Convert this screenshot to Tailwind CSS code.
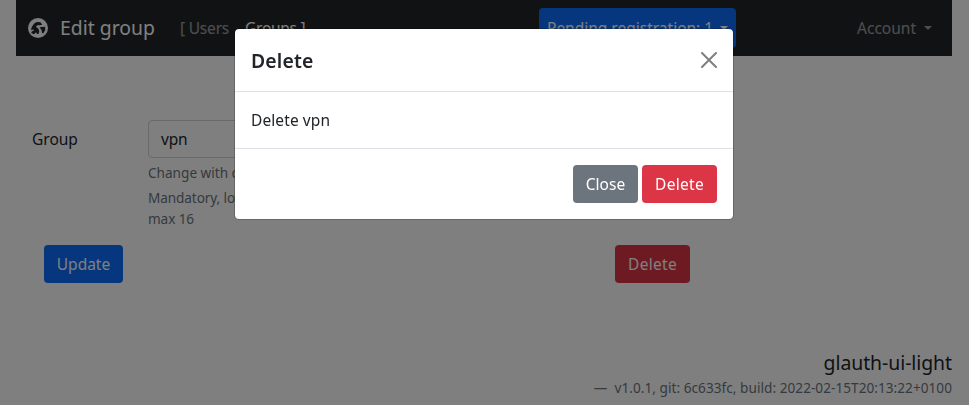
<!DOCTYPE html>
<html lang="en">
<head>
<meta charset="utf-8">
<title>Edit group</title>
<script src="https://cdn.jsdelivr.net/npm/@tailwindcss/browser@4"></script>
</head>
<body class="h-[405px] overflow-hidden bg-white font-['Noto_Sans',sans-serif] text-[15.5px] leading-6 text-[#212529]">
<div class="flex h-[405px] flex-col pl-4 pr-[17px]">
  <nav class="flex h-14 shrink-0 items-center bg-[#212529] pl-3 pr-5 whitespace-nowrap">
    <svg class="size-5 shrink-0" viewBox="0 0 20 20"><circle cx="10" cy="10" r="10" fill="#fff"/><path d="M3 12C3.5 8 6 5 9 4L12.5 4.3 14.3 6.8 11.5 7.3 9.8 7 7.8 8.8 10.2 10.5 11.2 13 10.8 15.8 9 16 8 14.2 6 16.2 3.2 15 3.8 13.6 6 12.6 5.4 11.6ZM11.6 9.2 17.2 8.8 17.2 12 15.2 15.4 14 14.8 13.6 12.2Z" fill="#212529"/></svg>
    <span class="ml-3 w-[120px] text-[19.4px] text-white">Edit group</span>
    <span class="w-[65px] tracking-[-0.2px] text-white/55">[ Users</span>
    <span class="w-[294px] tracking-[-0.25px] text-white">Groups ]</span>
    <button class="flex h-10 w-[197px] items-center rounded bg-[#0d6efd] pl-2 text-white"><span class="w-[173px] text-left">Pending registration: 1</span><i class="border-x-[4.5px] border-t-[4.5px] border-x-transparent border-t-white"></i></button>
    <span class="ml-auto flex items-center gap-2 text-white/55"><span>Account</span><i class="border-x-[4.5px] border-t-[4.5px] border-x-transparent border-t-white/55"></i></span>
  </nav>
  <main class="mt-16 flex h-[125px] shrink-0 pl-4">
    <label class="w-[116px] pt-[7px]">Group</label>
    <div class="w-[190px]">
      <div class="h-[38px] rounded border border-[#ced4da] px-3 py-[6px] tracking-[-0.15px]">vpn</div>
      <p class="mt-1 text-[13.6px] leading-[21px] whitespace-nowrap text-[#6c757d]">Change with care</p>
      <p class="mt-1 text-[13.6px] leading-[21px] tracking-[-0.1px] whitespace-nowrap text-[#6c757d]">Mandatory, lowercase,<br>max 16</p>
    </div>
  </main>
  <div class="flex shrink-0 pl-7 text-white">
    <button class="h-[38px] w-[79px] rounded bg-[#0d6efd]">Update</button>
    <button class="ml-[492px] h-[38px] w-[75px] rounded bg-[#dc3545] tracking-[0.3px]">Delete</button>
  </div>
  <footer class="mt-[68px] text-right">
    <h2 class="text-[19.4px] leading-6 tracking-[-0.05px]">glauth-ui-light</h2>
    <p class="mt-[2px] text-[13.6px] leading-[21px] tracking-[0.04px] text-[#6c757d]">—&nbsp; v1.0.1, git: 6c633fc, build: 2022-02-15T20:13:22+0100</p>
  </footer>
</div>
<div class="fixed inset-0 flex items-start bg-black/50 pl-[234px] pt-7">
  <section role="dialog" class="w-[500px] rounded-[5px] border border-black/20 bg-white bg-clip-padding">
    <header class="flex h-[63px] items-center justify-between border-b border-[#dee2e6] px-4">
      <h1 class="pt-px text-[19.4px] font-semibold tracking-[0.15px]">Delete</h1>
      <svg class="size-4" viewBox="0 0 16 16" fill="none" stroke="#7f7f7f" stroke-width="2" stroke-linecap="round"><path d="M1 1 15 15M15 1 1 15"/></svg>
    </header>
    <div class="h-14 px-4 pt-4 tracking-[0.1px]">Delete vpn</div>
    <footer class="flex h-[71px] items-center justify-end gap-1 border-t border-[#dee2e6] px-4 text-white">
      <button class="h-[38px] w-[65px] rounded bg-[#6c757d]">Close</button>
      <button class="h-[38px] w-[75px] rounded bg-[#dc3545] tracking-[0.3px]">Delete</button>
    </footer>
  </section>
</div>
</body>
</html>
